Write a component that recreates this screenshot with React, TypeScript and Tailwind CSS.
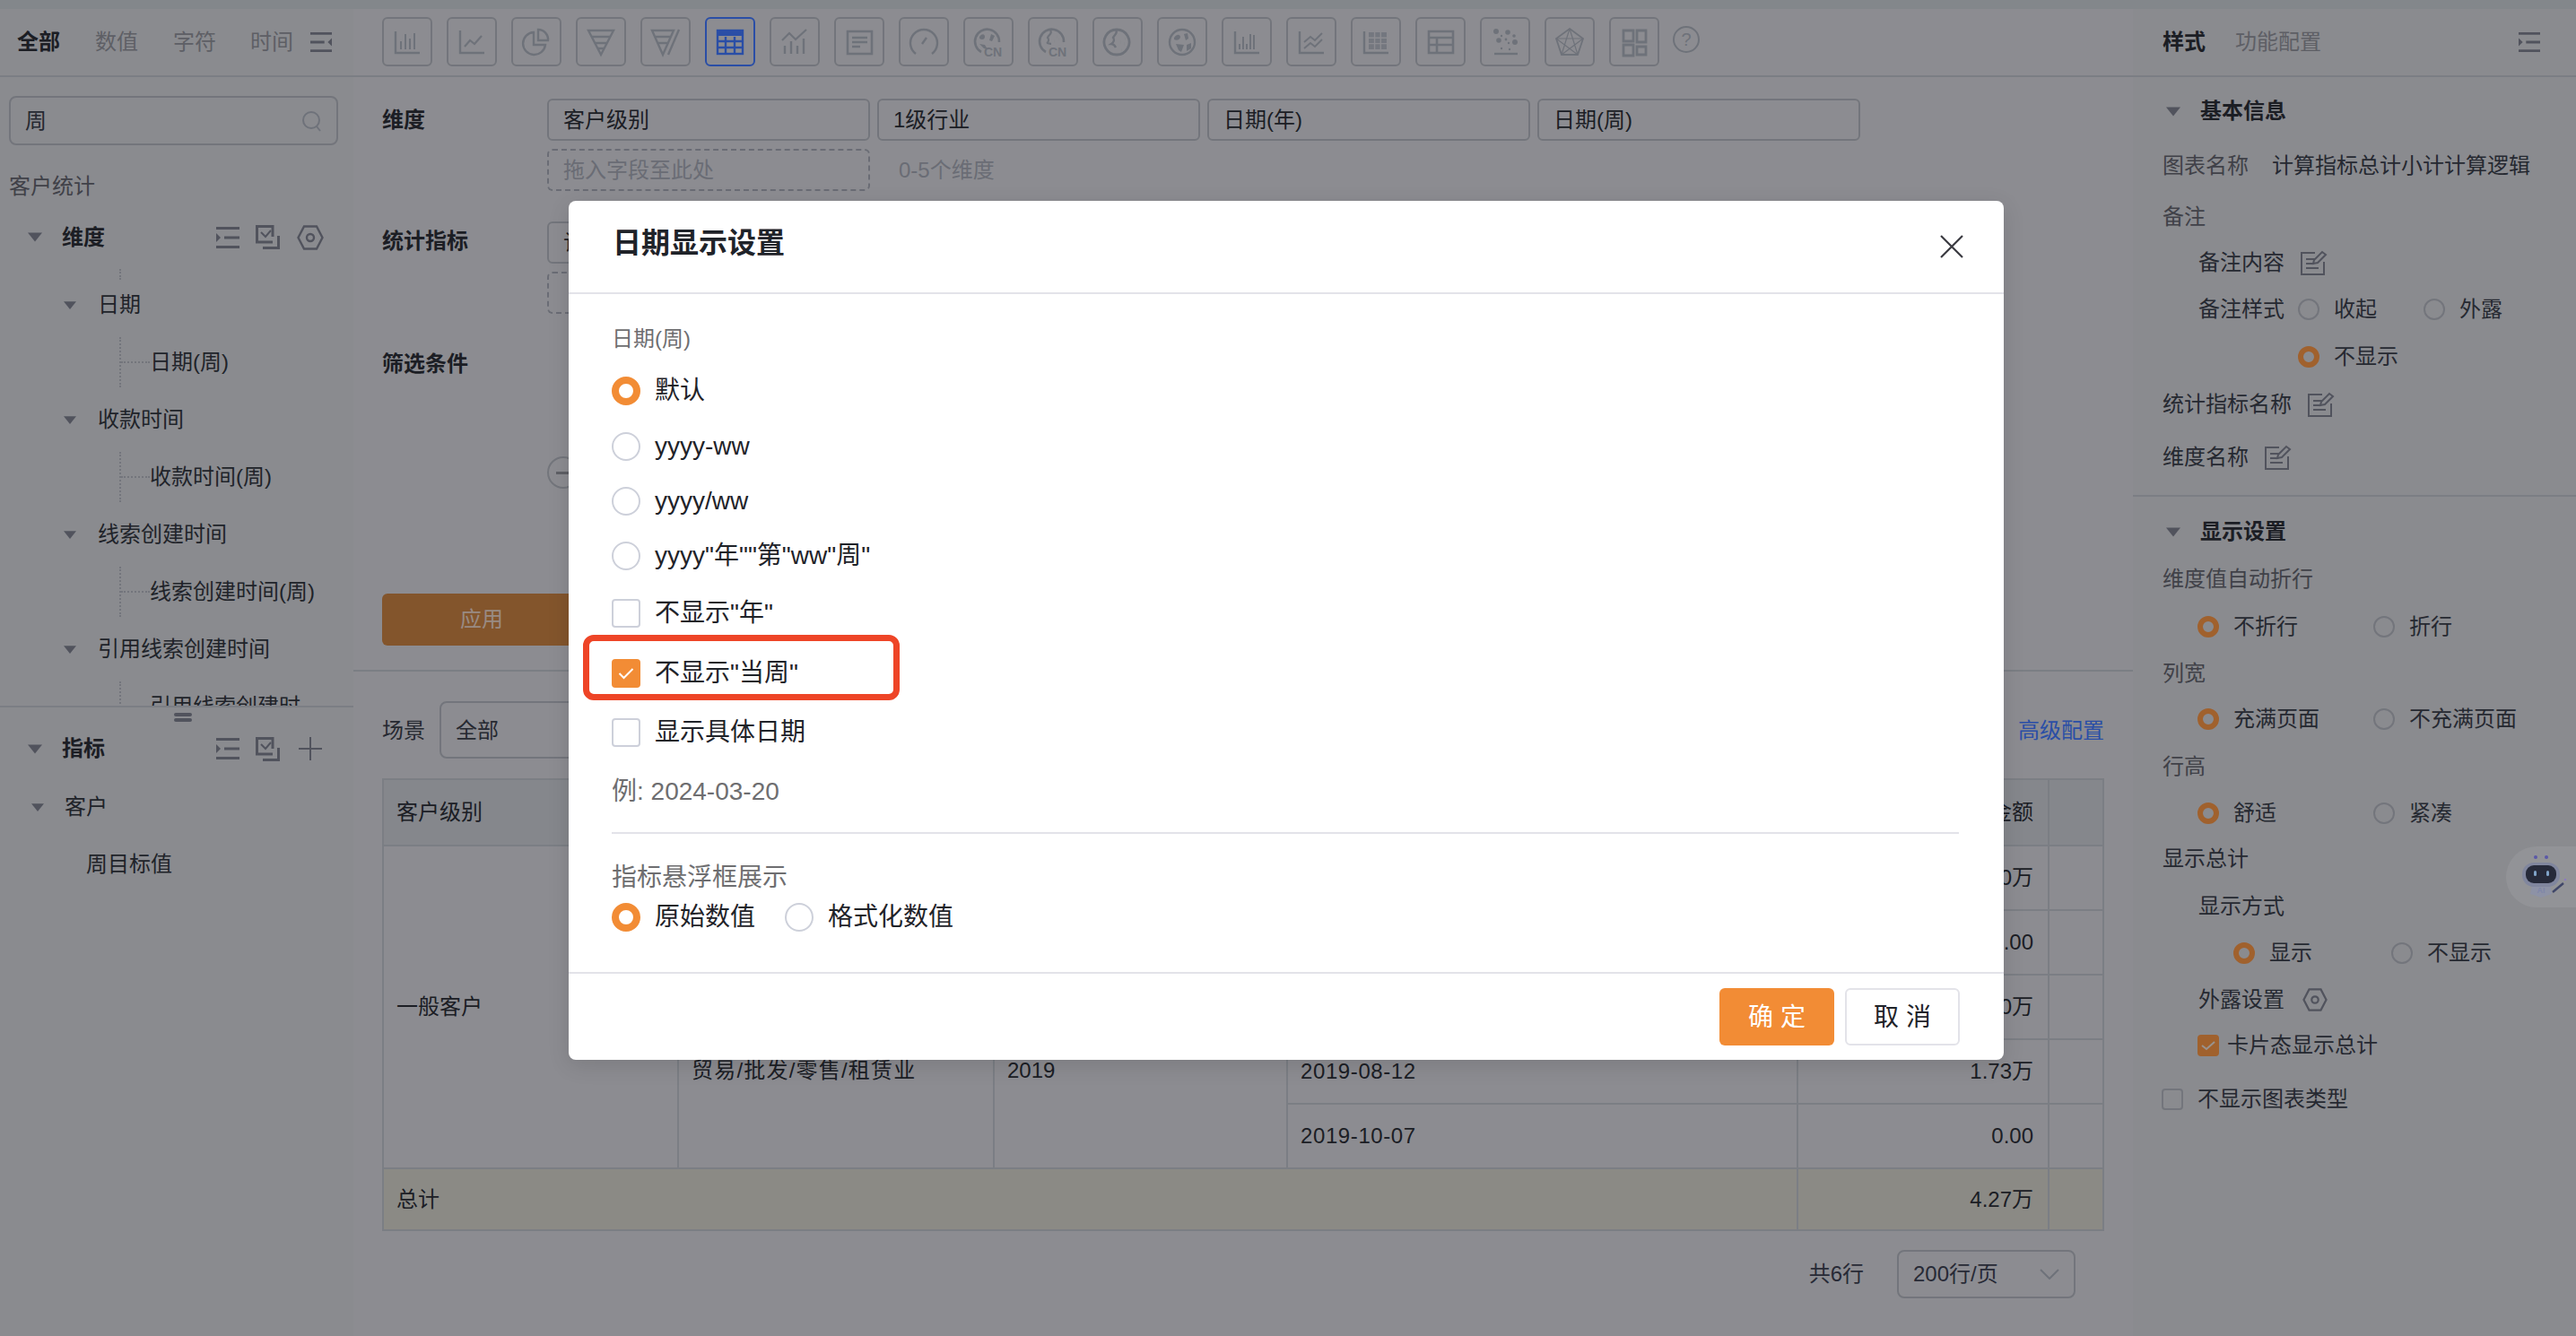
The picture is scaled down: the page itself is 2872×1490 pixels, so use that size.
import React from 'react';

const Tri = ({ big = false }: { big?: boolean }) => (
  <svg width={big ? 16 : 14} height={big ? 11 : 9} viewBox="0 0 16 10" className="shrink-0 text-[#7f838e]">
    <path d="M0 0h16L8 10z" fill="currentColor" />
  </svg>
);

const IndentIcon = ({ flip = false, w = 26 }: { flip?: boolean; w?: number }) => (
  <svg width={w} height="24" viewBox="0 0 26 24" className="shrink-0 text-[#7f838e]" style={flip ? { transform: 'scaleX(-1)' } : undefined}>
    <path d="M0 1.5h26M9 12h17M0 22.5h26" stroke="currentColor" strokeWidth="3" fill="none" />
    <path d="M0 7l5 5-5 5z" fill="currentColor" />
  </svg>
);

const CheckStack = () => (
  <svg width="27" height="27" viewBox="0 0 27 27" className="shrink-0 text-[#7f838e]" fill="none" stroke="currentColor" strokeWidth="3">
    <path d="M19 13V1.5H1.5V19H19" />
    <path d="M6 8l5 5 6-7" strokeWidth="2" />
    <path d="M25.5 12v13.5H8" />
  </svg>
);

const Hex = ({ w = 32, h = 28 }: { w?: number; h?: number }) => (
  <svg width={w} height={h} viewBox="0 0 30 28" className="shrink-0 text-[#7f838e]" fill="none" stroke="currentColor" strokeWidth="2.4">
    <path d="M8 1.5h14L28.5 14 22 26.5H8L1.5 14z" />
    <circle cx="15" cy="14" r="4" />
  </svg>
);

const EditIcon = () => (
  <svg width="30" height="28" viewBox="0 0 30 28" className="shrink-0 text-[#7f838e]" fill="none" stroke="currentColor" strokeWidth="2">
    <path d="M16 3H1v24h25V13" />
    <path d="M6 10h10M6 15h9M6 20h14" />
    <path d="M14 15l1-4L24 2l4 3-9 9z" />
  </svg>
);

const ChartBtn = ({ active = false, children }: { active?: boolean; children: React.ReactNode }) => (
  <div className={active ? 'w-[56px] h-[55px] shrink-0 rounded-[6px] border-2 border-[#427aff] flex items-center justify-center text-[#427aff]' : 'w-[56px] h-[55px] shrink-0 rounded-[6px] border-2 border-[#b4b8bd] flex items-center justify-center text-[#adb2ba]'}>
    <svg width="36" height="36" viewBox="0 0 36 36" fill="none" stroke="currentColor" strokeWidth="2">{children}</svg>
  </div>
);

const Axis = () => <path d="M5 6v24h27" strokeWidth="2.4" />;

const CN = () => (
  <text x="13" y="34" fontSize="14" fontWeight="700" fontFamily="Liberation Sans" fill="currentColor" stroke="none">CN</text>
);

const icons = [
  <><Axis /><path d="M11 26v-9M16 26V9M21 26V14M26 26V8" strokeWidth="2" /></>,
  <><path d="M5 5v25h27" strokeWidth="2.4" /><path d="M10 23l6-7 5 4 8-9" strokeWidth="2.2" /></>,
  <><path d="M15 7a12.5 12.5 0 1 0 13 14H15z" strokeWidth="2.4" /><path d="M20 4a11 11 0 0 1 11 12H20z" strokeWidth="2.4" /></>,
  <><path d="M4 5h28L18 32z" strokeWidth="2.4" /><path d="M8 12h20M12 19h12M15 25h6" strokeWidth="2.4" /></>,
  <><path d="M3 5h24L15 32z" strokeWidth="2.4" /><path d="M7 12h16M10 19h10" strokeWidth="2.4" /><path d="M33 4L21 32" strokeWidth="2.4" /></>,
  <><rect x="4" y="5" width="28" height="26" strokeWidth="2.4" /><path d="M4 8h28" strokeWidth="6" /><path d="M4 17h28M4 24h28M13 12v19M23 12v19" strokeWidth="2.4" /></>,
  <><path d="M4 16l8-8 7 7 12-11" strokeWidth="2.2" /><path d="M7 31v-9M14 31V17M21 31v-9M28 31V14" strokeWidth="2.4" /></>,
  <><rect x="5" y="6" width="27" height="25" strokeWidth="2.6" /><path d="M10 13h17M10 18h17M10 23h9" strokeWidth="2.4" /></>,
  <><path d="M9 31A15 15 0 1 1 27 31" strokeWidth="2.4" /><path d="M16 20l5-7" strokeWidth="2.4" /></>,
  <>
    <path d="M10 29A13.5 13.5 0 1 1 30 18" strokeWidth="2.6" />
    <path d="M8 12c3-4 6-3 6 0s-3 4-6 2zM21 9l4 2-3 6-3-1zM8 20l6 1 3 5-4-1z" fill="currentColor" stroke="none" />
    <CN />
  </>,
  <>
    <path d="M10 29A13.5 13.5 0 1 1 30 18" strokeWidth="2.6" />
    <path d="M15 5c3 3-2 5-3 8 2 2 1 5-1 6 2 0 4 1 5 1" strokeWidth="2.2" />
    <path d="M19 17h.1M24 15h.1M29 18h.1M22 12h.1" strokeWidth="3" />
    <CN />
  </>,
  <>
    <path d="M17 4a14 14 0 1 0 .01 0" strokeWidth="2.8" />
    <path d="M16 4c3 4-2 6-3 9 2 2 1 5-2 7 3 0 4 2 5 4" strokeWidth="2.4" />
    <path d="M21 18h.1M26 14h.1M25 20h.1M30 17h.1M29 24h.1M22 27h.1M26 27h.1" strokeWidth="3.4" />
  </>,
  <><circle cx="18" cy="18" r="14" strokeWidth="2.4" /><path d="M9 13c3-4 6-4 7-1 0 3-4 5-7 3z M20 9l4-1 1 6-3 2z M11 20l9 1-3 8-3-2z M23 21l5-2 0 6-5 3z" fill="currentColor" stroke="none" /></>,
  <><Axis /><path d="M10 26v-6M14 26V12M18 26v-6M22 26V9M26 26V10" strokeWidth="2" /></>,
  <><Axis /><path d="M10 18l7-6 5 4 8-8M10 25l7-6 5 4 8-8" strokeWidth="2" /></>,
  <><Axis /><path d="M10 7h20v19H10z" fill="currentColor" stroke="none" opacity="0.8" /><path d="M10 13.3h20M10 19.6h20M16.6 7v19M23.3 7v19" stroke="#dbdcde" strokeWidth="1.4" /></>,
  <><rect x="5" y="6" width="27" height="24" strokeWidth="2.6" /><path d="M5 13h27M5 21h27M14 13v17" strokeWidth="2.6" /></>,
  <><path d="M6 31h26" strokeWidth="2.4" /><g fill="currentColor" stroke="none"><circle cx="8" cy="6" r="3" /><circle cx="21" cy="7" r="2.8" /><circle cx="28" cy="11" r="1.8" /><circle cx="14" cy="11" r="1.2" /><circle cx="11" cy="16" r="2.8" /><circle cx="19" cy="15" r="1.4" /><circle cx="29" cy="18" r="3" /><circle cx="22" cy="19" r="1.2" /><circle cx="14" cy="25" r="1.2" /><circle cx="23" cy="26" r="1.2" /></g></>,
  <><path d="M18 3l15 11-6 18H9L3 14z" strokeWidth="1.8" /><path d="M18 3l-9 29M18 3l9 29M3 14h30M3 14l24 18M33 14L9 32" strokeWidth="1.2" /></>,
  <><path d="M6 5h11v12H6zM21 5h10v13H21zM6 21h11v12H6zM21 23h10v9H21z" strokeWidth="2.8" /></>,
];

const Bold = ({ children }: { children: React.ReactNode }) => <span className="font-bold text-[#2d3035] whitespace-nowrap">{children}</span>;

const TreeParent = ({ label }: { label: string }) => (
  <div className="h-[64px] flex items-center pl-[71px] text-[#32373c]">
    <Tri />
    <span className="ml-[24px]">{label}</span>
  </div>
);

const TreeChild = ({ label }: { label: string }) => (
  <div className="h-[64px] flex items-center pl-[133px] text-[#32373c]">
    <div className="h-[56px] border-l-2 border-dotted border-[#b4b8bd]" />
    <div className="w-[32px] border-t-2 border-dotted border-[#b4b8bd]" />
    <span className="whitespace-nowrap">{label}</span>
  </div>
);

const Dot = ({ on = false }: { on?: boolean }) => (
  <span className={on ? 'w-[24px] h-[24px] shrink-0 rounded-full border-[6px] border-[#fa9843]' : 'w-[24px] h-[24px] shrink-0 rounded-full border-2 border-[#b4b8bd]'} />
);

const Opt = ({ on = false, label, className }: { on?: boolean; label: string; className: string }) => (
  <div className={`flex items-center gap-[16px] text-[#3b4048] whitespace-nowrap ${className}`}>
    <Dot on={on} />
    <span>{label}</span>
  </div>
);

const MRadio = ({ on = false }: { on?: boolean }) => (
  <span className={on ? 'w-[32px] h-[32px] shrink-0 rounded-full border-[8px] border-[#f28c35]' : 'w-[32px] h-[32px] shrink-0 rounded-full border-2 border-[#cdd0da]'} />
);

const MCheck = ({ on = false }: { on?: boolean }) =>
  on ? (
    <span className="w-[32px] h-[32px] shrink-0 rounded-[4px] bg-[#f28c35] flex items-center justify-center">
      <svg width="18" height="14" viewBox="0 0 18 14" fill="none" stroke="#fff" strokeWidth="2"><path d="M1.5 7l5 5L16.5 2" /></svg>
    </span>
  ) : (
    <span className="w-[32px] h-[32px] shrink-0 rounded-[4px] border-2 border-[#cdd0da]" />
  );

export default function App() {
  const cellB = 'border-2 border-[#c0c5ca] px-[14px] align-middle';
  const numB = 'border-2 border-[#c0c5ca] px-[16px] text-right align-middle';
  return (
    <div className="relative w-[2872px] h-[1490px] overflow-hidden flex flex-col bg-[#dbdcde] text-[24px] leading-[32px] text-[#2d3035] font-['Liberation_Sans','Noto_Sans_CJK_SC',sans-serif]">
      <div className="h-[10px] shrink-0 bg-[#ced3d5]" />
      <div className="flex flex-1 min-h-0">
        {/* left */}
        <aside className="w-[394px] shrink-0 bg-[#d8d9db] flex flex-col">
          <div className="h-[76px] shrink-0 border-b-2 border-[#c0c5ca] flex items-center pl-[19px] whitespace-nowrap">
            <Bold>全部</Bold>
            <span className="ml-[39px] text-[#93959a]">数值</span>
            <span className="ml-[39px] text-[#93959a]">字符</span>
            <span className="ml-[38px] text-[#93959a]">时间</span>
            <span className="ml-[19px]"><IndentIcon flip w={24} /></span>
          </div>
          <div className="h-[701px] shrink-0 overflow-hidden">
            <div className="ml-[10px] mr-[17px] mt-[21px] h-[55px] rounded-[8px] border-2 border-[#b4b8bd] flex items-center justify-between pl-[16px] pr-[16px]">
              <span className="text-[#3b4048]">周</span>
              <svg width="22" height="24" viewBox="0 0 22 24" fill="none" stroke="#adb2ba" strokeWidth="2"><circle cx="10" cy="11" r="9" /><path d="M16 18l4 5" /></svg>
            </div>
            <div className="h-[72px] flex items-center pl-[10px] pt-[20px] text-[#64666c]">客户统计</div>
            <div className="h-[64px] pb-[3px] flex items-center pl-[31px] pr-[32px]">
              <Tri big />
              <span className="ml-[22px] flex-1"><Bold>维度</Bold></span>
              <div className="flex items-center gap-[18px]"><IndentIcon /><CheckStack /><Hex /></div>
            </div>
            <div className="mt-[2px] ml-[133px] h-[12px] border-l-2 border-dotted border-[#b4b8bd]" />
            <div className="h-[60px] pb-[4px] flex items-center pl-[71px] text-[#32373c]"><Tri /><span className="ml-[24px]">日期</span></div>
            <TreeChild label="日期(周)" />
            <TreeParent label="收款时间" />
            <TreeChild label="收款时间(周)" />
            <TreeParent label="线索创建时间" />
            <TreeChild label="线索创建时间(周)" />
            <TreeParent label="引用线索创建时间" />
            <TreeChild label="引用线索创建时" />
          </div>
          <div className="flex-1 border-t-2 border-[#c0c5ca]">
            <div className="flex justify-center pt-[6px] pl-[14px]">
              <div className="w-[20px] flex flex-col gap-[2px]"><div className="h-[4px] rounded-full bg-[#7f838e]" /><div className="h-[4px] rounded-full bg-[#7f838e]" /></div>
            </div>
            <div className="h-[50px] mt-[5px] flex items-center pl-[31px] pr-[32px]">
              <Tri big />
              <span className="ml-[22px] flex-1"><Bold>指标</Bold></span>
              <div className="flex items-center gap-[18px]">
                <IndentIcon />
                <CheckStack />
                <svg width="32" height="30" viewBox="-3 -2 32 30" className="text-[#7f838e]" fill="none" stroke="currentColor" strokeWidth="2"><path d="M13 0v26M0 13h26" /></svg>
              </div>
            </div>
            <div className="h-[64px] mt-[8px] flex items-center pl-[35px] text-[#32373c]"><Tri /><span className="ml-[23px]">客户</span></div>
            <div className="h-[64px] flex items-center pl-[96px] text-[#32373c]">周目标值</div>
          </div>
        </aside>

        {/* main */}
        <main className="flex-1 min-w-0 flex flex-col">
          <div className="h-[76px] shrink-0 border-b-2 border-[#c0c5ca] pl-[32px] pt-[9px] flex items-start gap-[16px]">
            {icons.map((ic, i) => (
              <ChartBtn key={i} active={i === 5}>{ic}</ChartBtn>
            ))}
            <div className="w-[30px] h-[30px] ml-[-1px] mt-[10px] rounded-full border-2 border-[#adb2ba] text-[#adb2ba] text-[20px] leading-[26px] text-center">?</div>
          </div>

          <div className="h-[663px] shrink-0 border-b-2 border-[#c0c5ca] px-[32px] pt-[24px]">
            <div className="flex">
              <div className="w-[184px] h-[47px] flex items-center"><Bold>维度</Bold></div>
              <div className="flex flex-col gap-[9px]">
                <div className="flex gap-[8px]">
                  {['客户级别', '1级行业', '日期(年)', '日期(周)'].map((t) => (
                    <div key={t} className="w-[360px] h-[47px] rounded-[6px] border-2 border-[#b4b8bd] flex items-center pl-[16px]">{t}</div>
                  ))}
                </div>
                <div className="flex items-center">
                  <div className="w-[360px] h-[47px] rounded-[6px] border-2 border-dashed border-[#a6aab2] flex items-center pl-[16px] text-[#a6aab2]">拖入字段至此处</div>
                  <span className="ml-[32px] text-[#a6aab2]">0-5个维度</span>
                </div>
              </div>
            </div>
            <div className="flex mt-[34px]">
              <div className="w-[184px] h-[47px] pb-[3px] flex items-center"><Bold>统计指标</Bold></div>
              <div className="flex flex-col gap-[9px]">
                <div className="w-[360px] h-[47px] rounded-[6px] border-2 border-[#b4b8bd] flex items-center pl-[16px]">计算指标</div>
                <div className="w-[360px] h-[47px] rounded-[6px] border-2 border-dashed border-[#a6aab2]" />
              </div>
            </div>
            <div className="flex mt-[33px]">
              <div className="w-[184px] h-[46px] flex items-center"><Bold>筛选条件</Bold></div>
              <div className="mt-[126px] w-[36px] h-[36px] rounded-full border-2 border-[#b4b8bd] flex items-center justify-center">
                <div className="w-[16px] h-[3px] bg-[#93959a]" />
              </div>
            </div>
            <div className="mt-[117px] w-[222px] h-[58px] rounded-[6px] bg-[#ce8541] flex items-center justify-center text-[#f0d9c8]">应用</div>
          </div>

          <div className="flex-1 px-[32px] pt-[33px]">
            <div className="flex items-center justify-between h-[64px]">
              <div className="flex items-center">
                <span className="w-[64px] pt-[2px] text-[#3b4048]">场景</span>
                <div className="w-[300px] h-[64px] rounded-[8px] border-2 border-[#b4b8bd] flex items-center pl-[16px] pt-[2px] text-[#3b4048]">全部</div>
              </div>
              <span className="pt-[2px] text-[#427aff]">高级配置</span>
            </div>
            <table className="mt-[22px] w-[1918px] table-fixed border-collapse">
              <colgroup>
                <col className="w-[329px]" /><col className="w-[352px]" /><col className="w-[327px]" /><col className="w-[569px]" /><col className="w-[280px]" /><col className="w-[61px]" />
              </colgroup>
              <thead>
                <tr className="h-[74px] bg-[#d0d3d7] text-left">
                  <th className={`${cellB} font-normal`}>客户级别</th>
                  <th className={`${cellB} font-normal`}>1级行业</th>
                  <th className={`${cellB} font-normal`}>日期(年)</th>
                  <th className={`${cellB} font-normal`}>日期(周)</th>
                  <th className={`${numB} font-normal`}>回款金额</th>
                  <th className={cellB} />
                </tr>
              </thead>
              <tbody>
                <tr className="h-[72px]">
                  <td rowSpan={5} className={cellB}>一般客户</td>
                  <td className={cellB}>建筑业</td><td className={cellB}>2019</td><td className={cellB}>2019-02-11</td><td className={numB}>1.30万</td><td className={cellB} />
                </tr>
                <tr className="h-[72px]">
                  <td className={cellB}>信息技术业</td><td className={cellB}>2019</td><td className={cellB}>2019-03-18</td><td className={numB}>0.00</td><td className={cellB} />
                </tr>
                <tr className="h-[72px]">
                  <td className={cellB}>制造业</td><td className={cellB}>2019</td><td className={cellB}>2019-05-06</td><td className={numB}>1.20万</td><td className={cellB} />
                </tr>
                <tr className="h-[72px]">
                  <td rowSpan={2} className="border-2 border-[#c0c5ca] px-[14px] pt-[18px] align-top tracking-[1.2px]">贸易/批发/零售/租赁业</td>
                  <td rowSpan={2} className="border-2 border-[#c0c5ca] px-[14px] pt-[18px] align-top">2019</td>
                  <td className={`${cellB} tracking-[0.6px]`}>2019-08-12</td><td className={numB}>1.73万</td><td className={cellB} />
                </tr>
                <tr className="h-[72px]">
                  <td className={`${cellB} tracking-[0.6px]`}>2019-10-07</td><td className={numB}>0.00</td><td className={cellB} />
                </tr>
                <tr className="h-[69px] bg-[#d9d8cc]">
                  <td colSpan={4} className={cellB}>总计</td><td className={numB}>4.27万</td><td className={cellB} />
                </tr>
              </tbody>
            </table>
            <div className="mt-[21px] pr-[32px] flex items-center justify-end gap-[37px] text-[#3e4250]">
              <span>共6行</span>
              <div className="w-[199px] h-[54px] rounded-[8px] border-2 border-[#b4b8bd] flex items-center justify-between pl-[16px] pr-[16px]">
                <span>200行/页</span>
                <svg width="22" height="12" viewBox="0 0 22 12" fill="none" stroke="#adb2ba" strokeWidth="2"><path d="M1 1l10 10L21 1" /></svg>
              </div>
            </div>
          </div>
        </main>

        {/* right */}
        <aside className="w-[494px] shrink-0 bg-[#d8d9db] flex flex-col pl-[33px] text-[#3b4048] whitespace-nowrap">
          <div className="-ml-[33px] pl-[33px] pr-[40px] h-[76px] shrink-0 border-b-2 border-[#c0c5ca] flex items-center">
            <Bold>样式</Bold>
            <span className="ml-[33px] flex-1 text-[#93959a]">功能配置</span>
            <IndentIcon w={24} />
          </div>
          <div className="h-[75px] pt-[1px] flex items-center pl-[4px]"><Tri big /><span className="ml-[22px]"><Bold>基本信息</Bold></span></div>
          <div className="h-[48px] flex items-center"><span className="text-[#64666c]">图表名称</span><span className="ml-[26px]">计算指标总计小计计算逻辑</span></div>
          <div className="h-[65px] flex items-center text-[#64666c]">备注</div>
          <div className="h-[38px] flex items-center pl-[40px] gap-[18px]"><span>备注内容</span><EditIcon /></div>
          <div className="h-[66px] flex items-center pl-[40px]">
            <span className="w-[111px]">备注样式</span>
            <Opt label="收起" className="w-[140px]" />
            <Opt label="外露" className="" />
          </div>
          <div className="h-[40px] flex items-center pl-[151px]"><Opt on label="不显示" className="" /></div>
          <div className="h-[66px] flex items-center gap-[18px]"><span>统计指标名称</span><EditIcon /></div>
          <div className="h-[52px] flex items-center gap-[18px]"><span>维度名称</span><EditIcon /></div>
          <div className="-ml-[33px] mt-[16px] border-t-2 border-[#c0c5ca]" />
          <div className="h-[78px] flex items-center pl-[4px]"><Tri big /><span className="ml-[22px]"><Bold>显示设置</Bold></span></div>
          <div className="h-[28px] flex items-center text-[#64666c]">维度值自动折行</div>
          <div className="h-[78px] flex items-center pl-[39px]"><Opt on label="不折行" className="w-[196px]" /><Opt label="折行" className="" /></div>
          <div className="h-[26px] flex items-center text-[#64666c]">列宽</div>
          <div className="h-[76px] flex items-center pl-[39px]"><Opt on label="充满页面" className="w-[196px]" /><Opt label="不充满页面" className="" /></div>
          <div className="h-[30px] flex items-center text-[#64666c]">行高</div>
          <div className="h-[74px] flex items-center pl-[39px]"><Opt on label="舒适" className="w-[196px]" /><Opt label="紧凑" className="" /></div>
          <div className="h-[28px] flex items-center text-[#3b4048]">显示总计</div>
          <div className="h-[78px] flex items-center pl-[40px]">显示方式</div>
          <div className="h-[26px] flex items-center pl-[79px]"><Opt on label="显示" className="w-[176px]" /><Opt label="不显示" className="" /></div>
          <div className="h-[78px] flex items-center pl-[40px] gap-[18px]"><span>外露设置</span><Hex w={32} h={26} /></div>
          <div className="h-[24px] flex items-center pl-[39px]">
            <span className="w-[24px] h-[24px] rounded-[4px] bg-[#fa9843] flex items-center justify-center">
              <svg width="16" height="12" viewBox="0 0 16 12" fill="none" stroke="#f0e6da" strokeWidth="2"><path d="M1 6l5 4 9-8" /></svg>
            </span>
            <span className="ml-[9px]">卡片态显示总计</span>
          </div>
          <div className="h-[96px] flex items-center -ml-[1px]">
            <span className="w-[24px] h-[24px] rounded-[4px] border-2 border-[#b4b8bd]" />
            <span className="ml-[16px]">不显示图表类型</span>
          </div>
        </aside>
      </div>

      {/* modal overlay */}
      <div className="absolute inset-0 bg-[rgba(0,0,8,0.36)] flex items-start pl-[634px] pt-[224px]">
        <div className="w-[1600px] bg-white rounded-[8px] text-[#1f2329] shadow-[0_6px_24px_rgba(0,0,0,0.12)] flex flex-col">
          <div className="h-[104px] border-b-2 border-[#e3e3e9] flex items-center justify-between pl-[49px] pr-[44px]">
            <span className="pb-[8px] text-[32px] leading-[44px] font-bold">日期显示设置</span>
            <svg width="28" height="28" viewBox="0 0 28 28" fill="none" stroke="#3a3a40" strokeWidth="2.2"><path d="M2 2l24 24M26 2L2 26" /></svg>
          </div>
          <div className="pl-[48px] pr-[50px] pt-[35px] text-[28px] leading-[38px]">
            <div className="h-[30px] flex items-center text-[24px] text-[#6e6e70]">日期(周)</div>
            <div className="mt-[12px] h-[62px] flex items-center gap-[16px]"><MRadio on /><span>默认</span></div>
            <div className="h-[61px] flex items-center gap-[16px]"><MRadio /><span>yyyy-ww</span></div>
            <div className="h-[61px] flex items-center gap-[16px]"><MRadio /><span>yyyy/ww</span></div>
            <div className="h-[61px] flex items-center gap-[16px]"><MRadio /><span>{'yyyy"年""第"ww"周"'}</span></div>
            <div className="h-[68px] flex items-center gap-[16px]"><MCheck /><span>{'不显示"年"'}</span></div>
            <div className="relative h-[66px] flex items-center gap-[16px]">
              <div className="absolute -left-[32px] -top-[10px] w-[353px] h-[73px] rounded-[12px] border-[7px] border-[#ee4527]" />
              <MCheck on /><span>{'不显示"当周"'}</span>
            </div>
            <div className="h-[65px] flex items-center gap-[16px]"><MCheck /><span>显示具体日期</span></div>
            <div className="h-[68px] flex items-center text-[#6e6e70]">例: 2024-03-20</div>
            <div className="mt-[11px] border-t-2 border-[#e3e3e9]" />
            <div className="mt-[34px] h-[30px] flex items-center text-[#6e6e70]">指标悬浮框展示</div>
            <div className="h-[58px] flex items-center">
              <MRadio on />
              <span className="ml-[16px]">原始数值</span>
              <span className="ml-[33px] flex"><MRadio /></span>
              <span className="ml-[16px]">格式化数值</span>
            </div>
          </div>
          <div className="mt-[32px] border-t-2 border-[#e3e3e9] pt-[16px] pb-[16px] pr-[49px] flex justify-end gap-[12px] text-[28px]">
            <div className="w-[128px] h-[64px] rounded-[6px] bg-[#f28c35] text-white flex items-center justify-center pt-[2px]">确 定</div>
            <div className="w-[128px] h-[64px] rounded-[6px] border-2 border-[#e3e3e9] flex items-center justify-center pt-[2px]">取 消</div>
          </div>
        </div>
      </div>

      {/* assistant bubble */}
      <div className="absolute right-0 top-[944px] w-[78px] h-[68px] rounded-l-full bg-[#929397] flex items-center pl-[14px]">
        <svg width="54" height="50" viewBox="0 0 54 50">
          <circle cx="19" cy="3" r="2" fill="#5a58a8" /><circle cx="31" cy="3" r="2" fill="#5a58a8" />
          <path d="M15 34h20l2 10-12 4-12-4z" fill="#8d92a6" />
          <text x="25" y="43" textAnchor="middle" fontSize="9" fontWeight="700" fontFamily="Liberation Sans" fill="#7f86a8">AI</text>
          <rect x="4" y="9" width="42" height="27" rx="13" fill="#80869e" />
          <rect x="8" y="12" width="34" height="20" rx="9" fill="#262a3a" />
          <rect x="17" y="18" width="3" height="6" rx="1.5" fill="#7fa3c8" /><rect x="31" y="18" width="3" height="6" rx="1.5" fill="#7fa3c8" />
          <path d="M38 42l12-10" stroke="#3f4668" strokeWidth="2.4" />
          <circle cx="52" cy="28" r="1" fill="#8a6fd0" />
        </svg>
      </div>
    </div>
  );
}
